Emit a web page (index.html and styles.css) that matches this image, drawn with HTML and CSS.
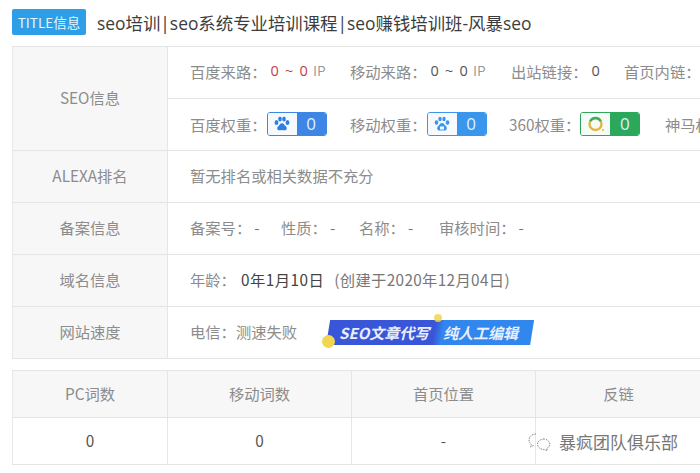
FILE: index.html
```html
<!DOCTYPE html>
<html lang="zh">
<head>
<meta charset="utf-8">
<title>TITLE信息</title>
<link rel="stylesheet" href="styles.css">
</head>
<body>
<div class="page">
  <div class="title-row">
    <span class="tag">TITLE信息</span>
    <span class="title-text">seo培训|seo系统专业培训课程|seo赚钱培训班-风暴seo</span>
  </div>

  <div class="info">
    <div class="head seo-head">SEO信息</div>
    <div class="seo-body">
      <div class="line first">
        <span class="item w-a">百度来路：<b class="red">0 ~ 0</b><i>IP</i></span>
        <span class="item w-a2">移动来路：<b>0 ~ 0</b><i>IP</i></span>
        <span class="item w-b">出站链接：<b>0</b></span>
        <span class="item">首页内链：</span>
      </div>
      <div class="line">
        <span class="item w-c">百度权重：<span class="badge blue">
            <span class="badge-icon"><svg width="18" height="17" viewBox="0 0 18 17"><g fill="#2f7fe0"><ellipse cx="3.500" cy="6.500" rx="1.900" ry="2.500"/><ellipse cx="7" cy="3" rx="1.800" ry="2.500"/><ellipse cx="11" cy="3" rx="1.800" ry="2.500"/><ellipse cx="14.500" cy="6.500" rx="1.900" ry="2.500"/><path d="M9 7.200c-2 0-2.600 2-4 3.200-1.400 1.200-.9 3.900 1.300 3.900 1.100 0 1.800-.4 2.700-.4s1.600.4 2.700.4c2.200 0 2.700-2.700 1.300-3.900C11.600 9.200 11 7.200 9 7.200z"/></g></svg></span>
            <span class="badge-num">0</span>
          </span></span>
        <span class="item w-c2">移动权重：<span class="badge sky">
            <span class="badge-icon"><svg width="18" height="17" viewBox="0 0 18 17"><g fill="#3a96ec"><ellipse cx="3.500" cy="6.500" rx="1.800" ry="2.300"/><ellipse cx="7" cy="3" rx="1.700" ry="2.300"/><ellipse cx="11" cy="3" rx="1.700" ry="2.300"/><ellipse cx="14.500" cy="6.500" rx="1.800" ry="2.300"/><path d="M9 7c-2 0-2.700 2-4 3.200-1.400 1.300-1 4.300 1.300 4.300h5.400c2.300 0 2.700-3 1.300-4.300C11.700 9 11 7 9 7z"/></g><rect x="7" y="10.500" width="4" height="3" fill="#fff"/></svg></span>
            <span class="badge-num">0</span>
          </span></span>
        <span class="item w-d">360权重：<span class="badge green">
            <span class="badge-icon"><svg width="20" height="18" viewBox="0 0 20 18"><circle cx="9.500" cy="9" r="6" fill="none" stroke="#e3b33c" stroke-width="2.300"/><path d="M4.200 6.200A6 6 0 0 1 14.800 6.200" fill="none" stroke="#3fae5a" stroke-width="2.300"/><circle cx="17" cy="15" r="1" fill="#e3b33c"/></svg></span>
            <span class="badge-num">0</span>
          </span></span>
        <span class="item">神马权重：</span>
      </div>
    </div>

    <div class="head">ALEXA排名</div>
    <div class="cell">暂无排名或相关数据不充分</div>

    <div class="head">备案信息</div>
    <div class="cell">
      <span class="item w-e">备案号：<em>-</em></span>
      <span class="item w-f">性质：<em>-</em></span>
      <span class="item w-g">名称：<em>-</em></span>
      <span class="item">审核时间：<em>-</em></span>
    </div>

    <div class="head">域名信息</div>
    <div class="cell">年龄：<b class="age">0年1月10日</b><span class="created">(创建于2020年12月04日)</span></div>

    <div class="head">网站速度</div>
    <div class="cell speed">
      <span>电信：</span><span class="speed-val">测速失败</span>
      <span class="ad">
        <span class="ad-bar">
          <span class="ad-a">SEO文章代写</span>
          <span class="ad-b">纯人工编辑</span>
        </span>
        <span class="dot dot-big"></span>
        <span class="dot dot-small"></span>
      </span>
    </div>
  </div>

  <div class="words">
    <div class="wh">PC词数</div>
    <div class="wh">移动词数</div>
    <div class="wh">首页位置</div>
    <div class="wh last">反链</div>
    <div class="wd">0</div>
    <div class="wd">0</div>
    <div class="wd">-</div>
    <div class="wd last"></div>
  </div>

  <div class="watermark">
    <svg width="26" height="20" viewBox="0 0 26 20"><g fill="none" stroke="#8a8a8a" stroke-width="1" stroke-dasharray="1.500 1"><path d="M9 2C4.500 2 2 5 2 8c0 2 1 3.400 2.300 4.400L3.500 15l3-1.500"/><path d="M17 7c-3.500 0-6.500 2.300-6.500 5.300s3 5.200 6.500 5.200l3.300 1.200-.6-2.400c2-1 3.300-2.300 3.300-4S20.500 7 17 7z"/></g></svg>
    <span>暴疯团队俱乐部</span>
  </div>
</div>
</body>
</html>
```

FILE: styles.css
```css
* { box-sizing: border-box; }
html, body { margin: 0; padding: 0; }
body {
  width: 700px;
  height: 473px;
  overflow: hidden;
  background: #fff;
  font-family: "Noto Sans CJK SC", "Open Sans", sans-serif;
  font-size: 15.3px;
  color: #8c8c8c;
}
b, i, em { font-weight: 400; font-style: normal; }
.page {
  position: relative;
  width: 700px;
  height: 473px;
  overflow: hidden;
  padding: 9px 0 0 12px;
}
.title-row {
  display: flex;
  align-items: center;
  height: 26px;
  margin-bottom: 11px;
}
.tag {
  width: 74px;
  height: 26px;
  line-height: 26px;
  border-radius: 2px;
  background: #2e9fe6;
  color: #e6f6ff;
  font-size: 13.500px;
  text-align: center;
  white-space: nowrap;
}
.title-text {
  margin-left: 11px;
  font-family: "Open Sans", "Noto Sans CJK SC", sans-serif;
  font-size: 17.400px;
  color: #3c3c3c;
  white-space: nowrap;
}
.info {
  display: grid;
  grid-template-columns: 155px 533px;
  grid-template-rows: 104px repeat(4, 52px);
  border-top: 1px solid #e4e4e4;
  border-left: 1px solid #e8e8e8;
  width: 688px;
  height: 313px;
}
.head {
  display: flex;
  align-items: center;
  justify-content: center;
  padding-bottom: 4px;
  background: #f7f7f7;
  border-right: 1px solid #e6e6e6;
  border-bottom: 1px solid #e4e4e4;
  white-space: nowrap;
}
.seo-body { display: flex; flex-direction: column; }
.line {
  flex: none;
  height: 52px;
  display: flex;
  align-items: center;
  padding: 0 0 1px 22px;
  border-bottom: 1px solid #e4e4e4;
  white-space: nowrap;
}
.first { padding-bottom: 4px; }
.cell {
  display: flex;
  align-items: center;
  padding: 0 0 4px 22px;
  border-bottom: 1px solid #e4e4e4;
  white-space: nowrap;
}
.item { display: inline-flex; flex: none; align-items: center; white-space: nowrap; }
.w-a { width: 160px; }
.w-a2 { width: 161px; }
.w-b { width: 113px; }
.w-c { width: 160px; }
.w-c2 { width: 159px; }
.w-d { width: 156px; }
.w-e { width: 91px; }
.w-f { width: 78px; }
.w-g { width: 80px; }
.item b {
  margin-left: 4px;
  color: #555;
  font-family: "Open Sans", sans-serif;
  font-size: 14.500px;
  word-spacing: 2.500px;
}
.item b.red { color: #c0424a; }
.item i { margin-left: 5px; color: #999; font-family: "Open Sans", sans-serif; font-size: 14.500px; }
.item em { margin-left: 3px; color: #777; }
.age { margin-left: 5px; color: #444; letter-spacing: 0.5px; }
.created { margin-left: 10px; color: #777; letter-spacing: 0.35px; }
.badge {
  display: inline-flex;
  flex: none;
  width: 60px;
  height: 24px;
  border: 1px solid;
  border-radius: 3px;
  overflow: hidden;
}
.badge-icon {
  width: 29px;
  display: flex;
  align-items: center;
  justify-content: center;
  background: #f6faff;
}
.badge-num {
  flex: 1;
  text-align: center;
  line-height: 22px;
  font-family: "Open Sans", sans-serif;
  font-size: 17px;
  color: #dff1ff;
}
.blue { border-color: #3d86e6; }
.blue .badge-num { background: #3d86e6; }
.sky { border-color: #3a96ec; }
.sky .badge-num { background: #3a96ec; }
.green { border-color: #2ca85a; }
.green .badge-icon { background: #f5fbf6; }
.green .badge-num { background: #2ca85a; }
.ad {
  position: relative;
  display: inline-block;
  margin-left: 29px;
  margin-top: 4px;
  width: 208px;
  height: 25px;
}
.ad-bar {
  display: flex;
  width: 208px;
  height: 25px;
  clip-path: polygon(4px 0, 100% 0, 204px 100%, 0 100%);
  background: linear-gradient(100deg, #3a56d8 0 52%, #3187ee 56% 100%);
  color: #e8eefc;
  font-size: 15px;
  font-weight: 700;
  font-style: italic;
  line-height: 25px;
  white-space: nowrap;
}
.ad-a { margin-left: 13px; width: 104px; }
.ad-b { margin-left: 0; }
.dot { position: absolute; border-radius: 50%; background: #f1d64e; }
.dot-big { width: 13px; height: 13px; left: -4px; top: 15px; }
.dot-small { width: 8px; height: 8px; left: 108px; top: -6px; opacity: 0.85; }
.words {
  display: grid;
  grid-template-columns: 155px 184px 184px 165px;
  grid-template-rows: 47px 47px;
  margin-top: 11px;
  width: 688px;
  border-top: 1px solid #e4e4e4;
  border-left: 1px solid #e8e8e8;
}
.wh, .wd {
  display: flex;
  align-items: center;
  justify-content: center;
  padding-bottom: 3px;
  border-right: 1px solid #e6e6e6;
  border-bottom: 1px solid #e4e4e4;
}
.last { border-right: none; }
.wh { background: #f7f7f7; }
.wd { color: #555; }
.watermark {
  position: absolute;
  left: 527px;
  top: 429px;
  display: flex;
  align-items: center;
  gap: 6px;
  font-size: 17px;
  color: #777;
  white-space: nowrap;
}
```
